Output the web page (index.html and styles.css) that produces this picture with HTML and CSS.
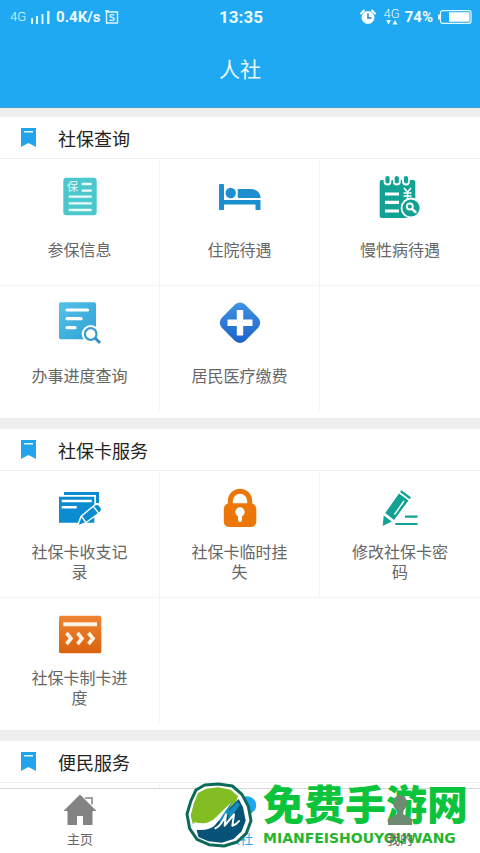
FILE: index.html
```html
<!DOCTYPE html>
<html lang="zh-CN">
<head>
<meta charset="utf-8">
<meta name="viewport" content="width=device-width, initial-scale=1">
<title>人社</title>
<link rel="stylesheet" href="styles.css">
</head>
<body>
<svg class="defs" width="0" height="0" aria-hidden="true">
  <defs>
    <linearGradient id="g-sky" x1="0" y1="0" x2="1" y2="1"><stop offset="0" stop-color="#54c2e6"/><stop offset="1" stop-color="#2fa0d8"/></linearGradient>
    <linearGradient id="g-blue" x1="0" y1="0" x2="0" y2="1"><stop offset="0" stop-color="#3f93e4"/><stop offset="1" stop-color="#1c62c6"/></linearGradient>
    <linearGradient id="g-orange" x1="0" y1="0" x2="0" y2="1"><stop offset="0" stop-color="#f08432"/><stop offset="1" stop-color="#d9620e"/></linearGradient>
    <symbol id="bookmark" viewBox="0 0 15 19"><path fill="#22a5ec" d="M0 0h15v19l-7.500-4L0 19z"/><path fill="#e8f8ff" d="M3 3h9v1.500H3z"/></symbol>
  </defs>
</svg>

<header class="top">
  <div class="status">
    <div class="status-left">
      <span class="net">4G</span>
      <svg width="20" height="14" viewBox="0 0 20 14" fill="#dff6ff"><path d="M0 8h2v6H0zM5 6h2v8H5zM10.500 4h2v10h-2zM16 1h2.500v13H16z"/></svg>
      <b>0.4K/s</b>
      <svg width="14" height="14" viewBox="0 0 14 14" fill="none" stroke="#dff6ff" stroke-width="1.400"><path d="M1.500 2h11v11h-11zM0 1h4"/><path d="M9.300 5.200C8.500 4.400 5 4.300 5 6s4.300 1.200 4.300 3S5.500 10.700 4.700 9.700"/></svg>
    </div>
    <b class="time">13:35</b>
    <div class="status-right">
      <svg width="16" height="16" viewBox="0 0 16 16"><circle cx="8" cy="8.500" r="6.500" fill="#f4fcff"/><path d="M1 4.500 4 1.500M15 4.500l-3-3" stroke="#f4fcff" stroke-width="2" stroke-linecap="round"/><path d="M8 4.500V9h3.500" fill="none" stroke="#3978c0" stroke-width="1.500"/></svg>
      <span class="net-data"><span class="net">4G</span><svg width="12" height="5" viewBox="0 0 12 5" fill="#e8faff"><path d="M0 0h5L2.500 4.500zM6.500 4.500h5L9 0z"/></svg></span>
      <b>74%</b>
      <svg class="battery" width="34" height="14" viewBox="0 0 34 14"><path fill="#e8faff" d="M0 4.500h2v5H0z"/><rect x="2.500" y=".7" width="30.500" height="12.600" rx="2" fill="none" stroke="#e8faff" stroke-width="1.200"/><path fill="#fff" d="M11 2.300h20.500v9.400H11z"/></svg>
    </div>
  </div>
  <h1>人社</h1>
</header>

<main>
  <section>
    <h2><svg width="15" height="19"><use href="#bookmark"/></svg>社保查询</h2>
    <div class="grid">
      <a href="#"><svg class="icon" viewBox="0 0 44 44"><rect x="5.300" y="2.700" width="33.400" height="37.600" rx="3" fill="#4cc8cd"/><text x="9" y="16" class="glyph">保</text><path stroke="#e9fbfb" stroke-width="2.300" d="M23.700 9h10M23.700 15.700h10M10.700 21.700h23M10.700 28.300h23M10.700 35h23"/></svg><span>参保信息</span></a>
      <a href="#"><svg class="icon" viewBox="0 0 44 44" fill="#1b8fd0"><path d="M1 10q0-1 1-1h3q1 0 1 1v15h36.500v10h-5v-5.500H6V35H1z"/><circle cx="12.700" cy="18" r="5.200"/><path d="M19.700 15q0-1 1-1H32q9 0 10.500 7.500V23H20.700q-1 0-1-1z"/></svg><span>住院待遇</span></a>
      <a href="#"><svg class="icon" viewBox="0 0 44 44"><rect x="1.700" y="5" width="35.600" height="38" rx="2" fill="#12a294"/><g fill="#12a294" stroke="#fff" stroke-width="1.800"><rect x="6.500" y="0" width="6" height="9.500" rx="3"/><rect x="15.800" y="0" width="6" height="9.500" rx="3"/><rect x="25" y="0" width="6" height="9.500" rx="3"/></g><path stroke="#fff" stroke-width="3.200" d="M7 19h14M7 27.300h14M7 36h14"/><path fill="none" stroke="#fff" stroke-width="1.500" d="m26 13 3.500 4 3.500-4M29.500 17v7M25.500 18h8M25.500 21h8"/><circle cx="33" cy="33" r="9.500" fill="#12a294" stroke="#fff" stroke-width="1.800"/><path fill="none" stroke="#fff" stroke-width="2.400" stroke-linecap="round" d="m34 34 3.500 3"/><circle cx="31.800" cy="31.500" r="3" fill="none" stroke="#fff" stroke-width="1.800"/></svg><span>慢性病待遇</span></a>
      <a href="#"><svg class="icon" viewBox="0 0 44 44"><rect x="1" y="1.300" width="37" height="37" rx="2" fill="url(#g-sky)"/><path stroke="#fff" stroke-width="3.200" stroke-linecap="round" d="M9 9h20.500M9 17.700h14M9 26.700h8"/><circle cx="32.700" cy="33" r="9" fill="#fff"/><path stroke="#fff" stroke-width="6" d="m37 37 5 5"/><circle cx="32.700" cy="33" r="5.800" fill="#fff" stroke="#3a9dd0" stroke-width="2.200"/><path stroke="#3a8fc4" stroke-width="3" d="m37 37 5 4.800"/></svg><span>办事进度查询</span></a>
      <a href="#"><svg class="icon" viewBox="0 0 44 44"><path fill="url(#g-blue)" d="M17 3.500q5-4 10 0l13.200 13.200q4 5 0 10L27 40q-5 4-10 0L3.800 26.700q-4-5 0-10z"/><path stroke="#fff" stroke-width="6.400" d="M22 9v25.400M9.500 21.700h25"/></svg><span>居民医疗缴费</span></a>
    </div>
  </section>

  <section>
    <h2><svg width="15" height="19"><use href="#bookmark"/></svg>社保卡服务</h2>
    <div class="grid">
      <a href="#"><svg class="icon" viewBox="0 0 44 44"><path fill="#0b8cd0" d="M6 5h35v11h-3V8H6zM1 9.700h35.300v26H1z"/><path stroke="#fff" stroke-width="2.500" d="M3.700 14h30M3.700 20.300h15"/><path fill="#0b8cd0" stroke="#fff" stroke-width="1.400" d="m19.500 39 3.500-9.500L36 18.500q3-2.500 6 .5t.5 6L27.500 36z"/><path stroke="#fff" stroke-width="1.300" d="m23.500 29.500 4.500 6M35 19l5.500 7"/></svg><span>社保卡收支记录</span></a>
      <a href="#"><svg class="icon" viewBox="0 0 44 44"><path fill="none" stroke="#ec7608" stroke-width="5" d="M12.300 19v-5a9.700 9.700 0 0 1 19.400 0v5"/><rect x="5.800" y="16.300" width="32.500" height="23.700" rx="5.500" fill="#ec7608"/><circle cx="22" cy="25" r="4.700" fill="#fff"/><path stroke="#fff" stroke-width="4" stroke-linecap="round" d="M22 26v7"/></svg><span>社保卡临时挂失</span></a>
      <a href="#"><svg class="icon" viewBox="0 0 44 44" fill="#12a294"><path d="m4.700 39 1-10.500 8 6zM7.300 26 21 6.500l9.500 7L16 33z"/><path d="m22 5 1.500-1.800 9.500 7-1.500 2z"/><path fill="none" stroke="#fff" stroke-width="1.400" d="M26 14 16.500 27.500"/><path stroke="#12a294" stroke-width="2.200" d="M27 29.700h12.500M17.300 37h22.200"/></svg><span>修改社保卡密码</span></a>
      <a href="#"><svg class="icon" viewBox="0 0 44 44"><rect x="1" y="2.700" width="42.300" height="37.600" rx="2" fill="url(#g-orange)"/><path stroke="#fff3e4" stroke-width="4" d="M5.300 11.300H39"/><path fill="none" stroke="#fff3e4" stroke-width="3.600" d="m8.500 20 4.500 5.500L8.500 31M19.500 20l4.500 5.500-4.500 5.500M30.500 20l4.500 5.500-4.500 5.500"/></svg><span>社保卡制卡进度</span></a>
    </div>
  </section>

  <section>
    <h2><svg width="15" height="19"><use href="#bookmark"/></svg>便民服务</h2>
    <div class="grid"><div class="cell"></div></div>
  </section>
</main>

<nav class="tabs">
  <a href="#"><svg width="36" height="36" viewBox="0 0 36 36" fill="#838383"><path d="M18 1.500 34.500 18h-4v14H21v-9h-6v9H5.500V18h-4z"/><path fill="none" stroke="#838383" stroke-width="1.500" d="M23 5h7v6.500"/></svg>主页</a>
  <a href="#" class="active"><svg width="36" height="36" viewBox="0 0 36 36" fill="#1ea7f1"><path d="M18 31 4 18C-2 9 9-1 18 6c8-7 20 1 15 11z"/></svg>人社</a>
  <a href="#" class="mine"><svg width="36" height="36" viewBox="0 0 36 36" fill="#6f8a72"><ellipse cx="18" cy="10" rx="7" ry="8"/><path d="M15 16h6v5l9 5v6H6v-6l9-5z"/></svg>我的</a>
  <div class="brand">
    <svg width="68" height="66" viewBox="43 33 204 198">
      <path fill="#fff" stroke="#0c6a58" stroke-width="9" stroke-linejoin="round" d="m102 42 41-3 42 6 29 25 19 36 8 43-14 38-28 26-39 12-45-4-36-16-22-32-8-44 12-40 15-32z"/>
      <path fill="#82bd24" d="m106 53 37-4 37 7 22 20-6 16-15 15-20 14-26 32-18 9-18-3-21-4-12 3-6-25 10-37 12-30z"/>
      <path fill="#075378" d="M78 176q32 4 52-10l38-46 36-36 13 25 8 40-12 32-24 23-36 11-40-4-30-13z"/>
      <path fill="#168fc0" d="m140 141 42-48-8 28 26-29 8 9-22 30-14 12 2-15-26 28z"/>
      <path fill="#fff" d="M68 152q32 12 60-6l54-52-34 50q-28 36-68 29l26-9q-24 1-38-12z"/>
      <path fill="none" stroke="#fff" stroke-width="6" stroke-linecap="round" stroke-linejoin="round" d="M134 172q18-8 32-42l-4 34 28-34-5 34q12-3 20-14"/>
    </svg>
    <div class="brand-text"><strong>免费手游网</strong><span>MIANFEISHOUYOUWANG</span></div>
  </div>
</nav>
</body>
</html>
```
FILE: styles.css
```css
* { box-sizing: border-box; }

body {
  margin: 0;
  height: 100vh;
  display: flex;
  flex-direction: column;
  overflow: hidden;
  background: #eee;
  color: #666;
  font-family: Roboto, "Noto Sans CJK SC", sans-serif;
}

a { color: inherit; text-decoration: none; }
svg { display: block; flex: none; }
.defs { position: absolute; }

/* Header */
.top {
  flex: none;
  background: #1ea9f2;
  color: #eefaff;
  border-bottom: 1px solid #4a9fd0;
}

.status {
  display: grid;
  grid-template-columns: 1fr auto 1fr;
  align-items: center;
  height: 33px;
  padding: 0 8px 0 10px;
  font-size: 15px;
}

.status-left, .status-right {
  display: flex;
  align-items: center;
  gap: 5px;
}

.status-right { justify-content: flex-end; }
.net { font-size: 13px; font-weight: 300; line-height: 12px; }
.time { font-size: 17px; }

.net-data {
  display: flex;
  flex-direction: column;
  align-items: center;
  margin-left: 3px;
}

h1 {
  margin: 0;
  height: 74px;
  font-size: 21px;
  font-weight: 400;
  line-height: 74px;
  text-align: center;
}

/* Service groups */
main {
  flex: 1;
  min-height: 0;
  overflow: hidden;
  display: flex;
  flex-direction: column;
  gap: 11px;
  padding-top: 9px;
}

section {
  flex: none;
  background: #fff;
  padding-bottom: 7px;
}

h2 {
  display: flex;
  align-items: center;
  gap: 22px;
  height: 42px;
  margin: 0;
  padding-left: 21px;
  border-bottom: 1px solid #f0f0f0;
  color: #222;
  font-size: 18px;
  font-weight: 400;
}

.grid {
  display: grid;
  grid-template-columns: repeat(3, 1fr);
  background: linear-gradient(#f3f3f3, #f3f3f3) 0 126px / 100% 1px no-repeat;
}

.grid a, .cell {
  display: flex;
  flex-direction: column;
  align-items: center;
  height: 126px;
  padding: 16px 28px 0;
  border-right: 1px solid #f3f3f3;
}

.grid a:nth-child(3n) { border-right: 0; }
.icon { width: 44px; height: 44px; }
.glyph { fill: #e9fbfb; font-size: 11px; }

.grid span {
  display: flex;
  align-items: center;
  min-height: 40px;
  margin: 12px 0 0;
  font-size: 16px;
  line-height: 20px;
  text-align: center;
}

/* Bottom tabs */
.tabs {
  position: relative;
  flex: none;
  display: grid;
  grid-template-columns: repeat(3, 1fr);
  height: 65px;
  background: #fff;
  border-top: 1px solid #d8d8d8;
}

.tabs a {
  display: flex;
  flex-direction: column;
  align-items: center;
  gap: 2px;
  padding-top: 4px;
  font-size: 13px;
  line-height: 18px;
}

.tabs .active { color: #1ea7f1; }
.tabs .mine { position: relative; z-index: 2; }

.brand {
  position: absolute;
  right: 12px;
  bottom: 5px;
  z-index: 1;
  display: flex;
  align-items: center;
  gap: 10px;
  pointer-events: none;
}

.brand-text {
  display: flex;
  flex-direction: column;
  color: #0bc43c;
}

.brand strong {
  font-size: 41px;
  font-weight: 900;
  line-height: 46px;
}

.brand span {
  color: #27b52e;
  font: 700 14px/18px "DejaVu Sans", sans-serif;
}
```
